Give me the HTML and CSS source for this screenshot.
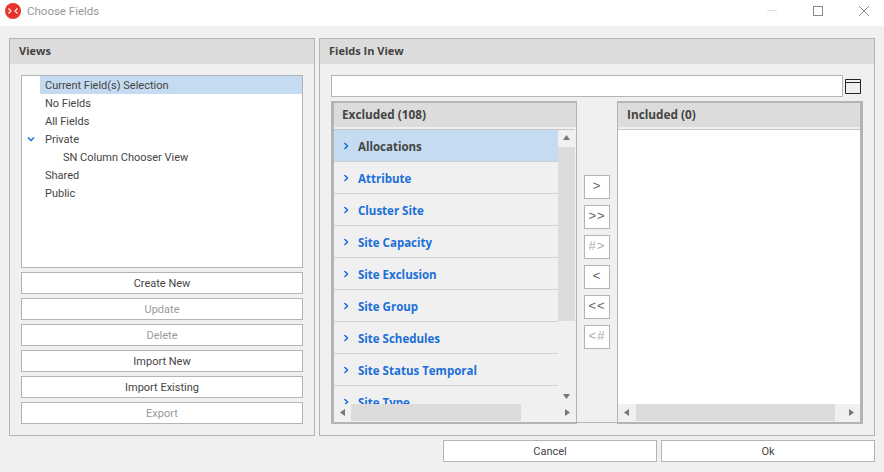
FILE: index.html
```html
<!DOCTYPE html>
<html lang="en">
<head>
  <meta charset="UTF-8">
  <meta name="viewport" content="width=device-width, initial-scale=1.0">
  <title>Choose Fields</title>
  <link rel="stylesheet" href="styles.css">
</head>
<body>
  <div class="titlebar">
    <svg class="logo" width="16" height="16" viewBox="0 0 16 16">
      <circle cx="8" cy="8" r="8" fill="#e8332a"/>
      <path d="M3.5 5.500 6 8l-2.500 2.500M12.500 5.500 10 8l2.500 2.500" fill="none" stroke="#fff" stroke-width="1.100"/>
    </svg>
    <span class="title">Choose Fields</span>
    <div class="window-controls">
      <svg width="12" height="12" viewBox="0 0 12 12"><path d="M1 5.500h10" stroke="#dcdcdc"/></svg>
      <svg width="12" height="12" viewBox="0 0 12 12"><rect x="1.500" y="1.500" width="9" height="9" fill="none" stroke="#8a8a8a"/></svg>
      <svg width="12" height="12" viewBox="0 0 12 12"><path d="M1 1l10 10M11 1 1 11" stroke="#8a8a8a" fill="none"/></svg>
    </div>
  </div>

  <div class="main">
    <section class="panel views">
      <h2>Views</h2>
      <div class="views-body">
        <div class="tree">
          <div class="tree-row selected">Current Field(s) Selection</div>
          <div class="tree-row">No Fields</div>
          <div class="tree-row">All Fields</div>
          <div class="tree-row">
            <svg class="tree-toggle" width="8" height="6" viewBox="0 0 8 6"><path d="M1 1.500 4 4.500l3-3" fill="none" stroke="#1a6fd8" stroke-width="1.500"/></svg>
            Private
          </div>
          <div class="tree-row child">SN Column Chooser View</div>
          <div class="tree-row">Shared</div>
          <div class="tree-row">Public</div>
        </div>
        <button class="btn">Create New</button>
        <button class="btn disabled">Update</button>
        <button class="btn disabled">Delete</button>
        <button class="btn">Import New</button>
        <button class="btn">Import Existing</button>
        <button class="btn disabled">Export</button>
      </div>
    </section>

    <section class="panel fields">
      <h2>Fields In View</h2>
      <div class="fields-body">
        <div class="search">
          <input type="text">
          <svg width="16" height="15" viewBox="0 0 16 15"><path d="M.5.500h15v14H.5zM.5 3.500h15" fill="none" stroke="#222"/></svg>
        </div>
        <div class="panes">
          <div class="pane excluded">
            <div class="pane-head">Excluded (108)</div>
            <div class="pane-content">
              <div class="list">
                <div class="group selected"><svg width="6" height="8" viewBox="0 0 6 8"><path d="M1.500 1 4.500 4l-3 3" fill="none" stroke="#1a6fd8" stroke-width="1.500"/></svg>Allocations</div>
                <div class="group"><svg width="6" height="8" viewBox="0 0 6 8"><path d="M1.500 1 4.500 4l-3 3" fill="none" stroke="#1a6fd8" stroke-width="1.500"/></svg>Attribute</div>
                <div class="group"><svg width="6" height="8" viewBox="0 0 6 8"><path d="M1.500 1 4.500 4l-3 3" fill="none" stroke="#1a6fd8" stroke-width="1.500"/></svg>Cluster Site</div>
                <div class="group"><svg width="6" height="8" viewBox="0 0 6 8"><path d="M1.500 1 4.500 4l-3 3" fill="none" stroke="#1a6fd8" stroke-width="1.500"/></svg>Site Capacity</div>
                <div class="group"><svg width="6" height="8" viewBox="0 0 6 8"><path d="M1.500 1 4.500 4l-3 3" fill="none" stroke="#1a6fd8" stroke-width="1.500"/></svg>Site Exclusion</div>
                <div class="group"><svg width="6" height="8" viewBox="0 0 6 8"><path d="M1.500 1 4.500 4l-3 3" fill="none" stroke="#1a6fd8" stroke-width="1.500"/></svg>Site Group</div>
                <div class="group"><svg width="6" height="8" viewBox="0 0 6 8"><path d="M1.500 1 4.500 4l-3 3" fill="none" stroke="#1a6fd8" stroke-width="1.500"/></svg>Site Schedules</div>
                <div class="group"><svg width="6" height="8" viewBox="0 0 6 8"><path d="M1.500 1 4.500 4l-3 3" fill="none" stroke="#1a6fd8" stroke-width="1.500"/></svg>Site Status Temporal</div>
                <div class="group"><svg width="6" height="8" viewBox="0 0 6 8"><path d="M1.500 1 4.500 4l-3 3" fill="none" stroke="#1a6fd8" stroke-width="1.500"/></svg>Site Type</div>
              </div>
              <div class="vscroll">
                <svg width="17" height="17" viewBox="0 0 17 17"><path d="M8.500 5 12 10H5z" fill="#777"/></svg>
                <div class="vthumb"></div>
                <svg class="vdown" width="17" height="17" viewBox="0 0 17 17"><path d="M8.500 12 12 7H5z" fill="#777"/></svg>
              </div>
            </div>
            <div class="hscroll">
              <svg width="17" height="17" viewBox="0 0 17 17"><path d="M6 8.500 11 5v7z" fill="#777"/></svg>
              <div class="hthumb thumb-excluded"></div>
              <svg class="hright" width="17" height="17" viewBox="0 0 17 17"><path d="M11 8.500 6 5v7z" fill="#777"/></svg>
            </div>
          </div>

          <div class="transfer">
            <button class="move">&gt;</button>
            <button class="move">&gt;&gt;</button>
            <button class="move disabled">#&gt;</button>
            <button class="move">&lt;</button>
            <button class="move">&lt;&lt;</button>
            <button class="move disabled">&lt;#</button>
          </div>

          <div class="pane included">
            <div class="pane-head">Included (0)</div>
            <div class="pane-content white"></div>
            <div class="hscroll">
              <svg width="17" height="17" viewBox="0 0 17 17"><path d="M6 8.500 11 5v7z" fill="#777"/></svg>
              <div class="hthumb thumb-included"></div>
              <svg class="hright" width="17" height="17" viewBox="0 0 17 17"><path d="M11 8.500 6 5v7z" fill="#777"/></svg>
            </div>
          </div>
        </div>
      </div>
    </section>
  </div>

  <div class="footer">
    <button class="btn">Cancel</button>
    <button class="btn">Ok</button>
  </div>
</body>
</html>
```

FILE: styles.css
```css
* {
  box-sizing: border-box;
}

html, body {
  height: 100%;
}

body {
  margin: 0;
  overflow: hidden;
  background: #f0f0f0;
  color: #444;
  font-family: Roboto, "Open Sans", sans-serif;
  font-size: 11px;
}

.titlebar {
  display: flex;
  align-items: center;
  height: 26px;
  padding-left: 5px;
  padding-bottom: 4px;
  background: white;
}

.logo {
  margin-right: 6px;
}

.title {
  color: #999;
  font-size: 11.500px;
}

.window-controls {
  display: flex;
  gap: 34px;
  margin-left: auto;
  margin-right: 14px;
}

.main {
  display: flex;
  gap: 4px;
  height: 398px;
  margin: 12px 9px 0;
}

.panel {
  display: flex;
  flex-direction: column;
  border: 1px solid #b4b4b4;
}

.views {
  width: 306px;
}

.fields {
  width: 556px;
}

.panel h2 {
  height: 25px;
  margin: 0;
  padding-left: 9px;
  background: #dcdcdc;
  font-family: "Open Sans", sans-serif;
  font-size: 11px;
  font-weight: 700;
  line-height: 24px;
}

.views-body {
  display: flex;
  flex-direction: column;
  gap: 4px;
  padding: 11px 11px 10px;
}

.tree {
  height: 193px;
  padding-left: 18px;
  border: 1px solid #b4b4b4;
  background: white;
}

.tree-row {
  position: relative;
  height: 18px;
  padding-top: 1px;
  padding-left: 5px;
  line-height: 17px;
}

.tree-row.selected {
  background: #c5dbf1;
}

.tree-row.child {
  padding-left: 23px;
}

.tree-toggle {
  position: absolute;
  left: -13px;
  top: 6px;
}

.btn {
  height: 22px;
  padding: 0;
  border: 1px solid #b4b4b4;
  background: white;
  color: #444;
  font-family: inherit;
  font-size: 11px;
}

.btn.disabled {
  color: #9a9a9a;
}

.fields-body {
  padding: 11px 11px 0;
}

.search {
  display: flex;
  align-items: center;
  gap: 2px;
  height: 22px;
}

.search input {
  width: 512px;
  height: 22px;
  border: 1px solid #b4b4b4;
  border-radius: 0;
  background: white;
}

.panes {
  display: flex;
  height: 323px;
  margin-top: 4px;
}

.pane {
  display: flex;
  flex-direction: column;
  border-style: solid;
  border-color: #b4b4b4;
}

.excluded {
  width: 246px;
  border-width: 2px 1px 2px 3px;
}

.included {
  width: 246px;
  border-width: 2px 3px 2px 1px;
}

.pane-head {
  flex: none;
  height: 26px;
  padding-left: 8px;
  border-bottom: 2px solid #f0f0f0;
  background: #dcdcdc;
  font-family: "Open Sans", sans-serif;
  font-size: 11.800px;
  font-weight: 700;
  line-height: 23px;
}

.included .pane-head {
  padding-left: 9px;
}

.pane-content {
  display: flex;
  flex: none;
  height: 275px;
  margin-right: 1px;
  border-top: 1px solid #c8c8c8;
}

.pane-content.white {
  margin-right: 0;
  background: white;
}

.list {
  width: 224px;
  height: 274px;
  overflow: hidden;
}

.group {
  display: flex;
  flex: none;
  align-items: center;
  gap: 9px;
  height: 32px;
  padding-top: 1px;
  padding-left: 9px;
  border-bottom: 1px solid #d0d0d0;
  color: #1a6fd8;
  font-family: "Open Sans", sans-serif;
  font-size: 11.500px;
  font-weight: 700;
}

.group.selected {
  background: #c5dbf1;
  color: #444;
}

.vscroll {
  display: flex;
  flex-direction: column;
  width: 17px;
}

.vthumb {
  width: 17px;
  height: 174px;
  background: #dcdcdc;
}

.vdown {
  margin-top: auto;
}

.hscroll {
  display: flex;
  flex: none;
  height: 17px;
}

.hthumb {
  height: 17px;
  background: #dcdcdc;
}

.thumb-excluded {
  width: 170px;
}

.thumb-included {
  width: 199px;
  margin-left: 1px;
}

.hright {
  margin-left: auto;
}

.transfer {
  display: flex;
  flex-direction: column;
  justify-content: center;
  align-items: center;
  gap: 6px;
  width: 40px;
  margin-bottom: 1px;
  border-bottom: 1px solid #b4b4b4;
}

.move {
  width: 26px;
  height: 24px;
  padding: 0 0 2px;
  border: 1px solid #b4b4b4;
  background: white;
  color: #666;
  font-family: "Liberation Sans", sans-serif;
  font-size: 13px;
  letter-spacing: 1px;
}

.move.disabled {
  color: #aaa;
}

.footer {
  display: flex;
  justify-content: flex-end;
  gap: 4px;
  margin: 4px 9px 0 0;
}

.footer .btn {
  width: 214px;
}
```
